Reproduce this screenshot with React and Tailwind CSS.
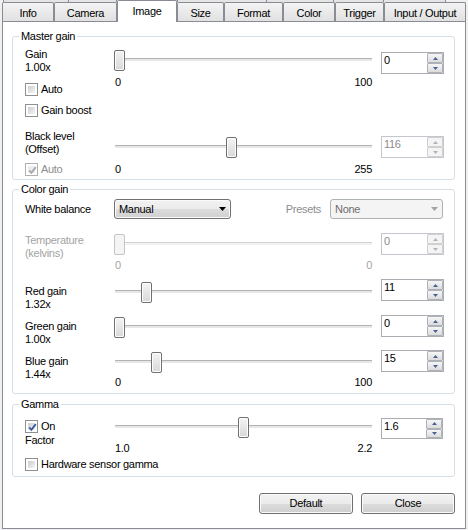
import React from "react";

const TABS = [
  { label: "Info", w: "w-[52px]" },
  { label: "Camera", w: "w-[63px]" },
  { label: "Image", w: "w-[60px]", active: true },
  { label: "Size", w: "w-[47px]" },
  { label: "Format", w: "w-[59px]" },
  { label: "Color", w: "w-[52px]" },
  { label: "Trigger", w: "w-[49px]" },
  { label: "Input / Output", w: "w-[82px]" },
];

// slider thumb travel in px (track width minus thumb)
const TRAVEL = 247;
const thumbLeft = (v, min, max) => Math.round(((v - min) / (max - min)) * TRAVEL);

const Tabs = () => (
  <div className="relative h-[21px]">
    {/* back row of tabs peeking out above */}
    <div className="absolute top-0 left-0 right-0 h-[2px] flex pl-[3px]">
      <div className="w-[66px] border-x border-[#898c95] bg-[#e4e4e4]" />
      <div className="w-[48px] border-r border-[#898c95] bg-[#e4e4e4]" />
      <div className="w-[60px]" />
      <div className="w-[90px] border-x border-[#898c95] bg-[#e4e4e4]" />
      <div className="w-[67px] border-r border-[#898c95] bg-[#e4e4e4]" />
      <div className="w-[50px] border-r border-[#898c95] bg-[#e4e4e4]" />
      <div className="w-[62px] border-r border-[#898c95] bg-[#e4e4e4]" />
    </div>
    <div className="relative flex items-end h-full pl-[2px]">
      {TABS.map((t) =>
        t.active ? (
          <div
            key={t.label}
            className={`${t.w} h-[22px] -mb-[1px] relative z-10 bg-white border border-b-0 border-[#898c95] rounded-t-[2px] text-center pt-[4px] leading-[13px]`}
          >
            {t.label}
          </div>
        ) : (
          <div
            key={t.label}
            className={`${t.w} h-[19px] border border-b-0 border-[#898c95] rounded-t-[2px] bg-gradient-to-b from-[#f3f3f3] to-[#e1e1e1] text-center pt-[4px] leading-[13px]`}
          >
            {t.label}
          </div>
        )
      )}
    </div>
  </div>
);

const Group = ({ title, className, children }) => (
  <div className={`relative border border-[#d5dfe5] rounded-[3px] pl-[12px] ${className}`}>
    <span className="absolute -top-[7px] left-[6px] bg-white px-[2px] leading-[13px]">{title}</span>
    {children}
  </div>
);

const Check = ({ label, checked, disabled, className = "" }) => (
  <div className={`flex items-center gap-[3px] h-[13px] ${className}`}>
    <span
      className={`relative w-[13px] h-[13px] border bg-white p-[2px] ${
        disabled ? "border-[#b1b1b1]" : "border-[#8e8f8f]"
      }`}
    >
      <span
        className={`block w-full h-full ${
          disabled ? "bg-[#ececec]" : "bg-gradient-to-br from-[#c9cdd3] to-[#f5f5f5]"
        }`}
      />
      {checked && (
        <svg className="absolute left-[1px] top-[1px]" width="11" height="11" viewBox="0 0 11 11">
          <path
            d="M2.2 5.4 L4.4 7.8 L8.8 2.2"
            fill="none"
            stroke={disabled ? "#a9a9a9" : "#3a5ba0"}
            strokeWidth="1.9"
          />
        </svg>
      )}
    </span>
    <span className={`leading-[13px] ${disabled ? "text-[#8d8d8d]" : ""}`}>{label}</span>
  </div>
);

const Slider = ({ pos, disabled }) => (
  <div className="relative h-[21px]">
    <div
      className={`absolute left-[1px] right-0 top-[8px] h-[3px] border-t ${
        disabled ? "border-[#d4d4d4] bg-[#f0f0f0]" : "border-[#b2b2b2] bg-[#e6e8e8]"
      }`}
    />
    <div
      className={`absolute top-0 w-[11px] h-[21px] rounded-[2px] border ${
        disabled
          ? "border-[#c4c4c4] bg-[#f4f4f4]"
          : "border-[#707070] bg-gradient-to-b from-[#f4f4f4] to-[#d8d8d8] shadow-[inset_0_0_0_1px_#fdfdfd]"
      }`}
      style={{ left: pos }}
    />
  </div>
);

const Range = ({ min, max, disabled, className = "" }) => (
  <div className={`flex justify-between pl-[1px] leading-[13px] ${disabled ? "text-[#a3a3a3]" : ""} ${className}`}>
    <span>{min}</span>
    <span>{max}</span>
  </div>
);

const SpinBtn = ({ up, disabled }) => (
  <div
    className={`flex items-center justify-center h-[10px] border rounded-[1px] ${
      disabled
        ? "border-[#d0d0d0] bg-[#f4f4f4]"
        : "border-[#adb2b9] bg-gradient-to-b from-[#f6f6f6] to-[#dcdcdc]"
    }`}
  >
    <svg width="5" height="3" viewBox="0 0 5 3">
      <path d={up ? "M0 3 L2.5 0 L5 3 Z" : "M0 0 L5 0 L2.5 3 Z"} fill={disabled ? "#b4b4b4" : "#4a5f94"} />
    </svg>
  </div>
);

const Spin = ({ value, disabled, h = "h-[22px]", w = "w-[63px]" }) => (
  <div className={`flex ${h} ${w} border bg-white ${disabled ? "border-[#c3c6cc]" : "border-[#abadb3]"}`}>
    <div className={`flex-1 pl-[2px] pt-[1px] leading-[13px] ${disabled ? "text-[#8b8b8b]" : ""}`}>{value}</div>
    <div className="flex flex-col w-[16px]">
      <SpinBtn up disabled={disabled} />
      <SpinBtn disabled={disabled} />
    </div>
  </div>
);

const Combo = ({ value, disabled, w }) => (
  <div
    className={`flex items-center ${w} h-[20px] rounded-[3px] border pl-[4px] pr-[4px] leading-[13px] ${
      disabled
        ? "border-[#adb2b5] bg-[#f4f4f4] text-[#6d6d6d]"
        : "border-[#707070] bg-[linear-gradient(#f2f2f2_0%,#ebebeb_50%,#dddddd_50%,#cfcfcf_100%)] shadow-[inset_0_0_0_1px_#fbfbfb]"
    }`}
  >
    <span className="flex-1">{value}</span>
    <svg width="7" height="4" viewBox="0 0 7 4">
      <path d="M0 0 L7 0 L3.5 4 Z" fill={disabled ? "#a2a2a2" : "#000"} />
    </svg>
  </div>
);

const Button = ({ children }) => (
  <div className="w-[94px] h-[21px] rounded-[3px] border border-[#707070] bg-[linear-gradient(#f2f2f2_0%,#ebebeb_50%,#dddddd_50%,#cfcfcf_100%)] shadow-[inset_0_0_0_1px_#fbfbfb] flex items-center justify-center leading-[13px]">
    {children}
  </div>
);

const Row = ({ className = "", children }) => (
  <div className={`grid grid-cols-[80px_258px_63px] gap-x-[9px] items-start ${className}`}>{children}</div>
);

export default function App() {
  return (
    <div className="w-[468px] h-[530px] bg-[#f0f0f0] text-black text-[11px] tracking-[-0.3px] font-['Liberation_Sans',Arial,sans-serif] overflow-hidden">
      <Tabs />

      <div className="ml-[2px] w-[464px] h-[508px] border border-[#898c95] bg-white pt-[14px] pl-[9px]">
        {/* Master gain */}
        <Group title="Master gain" className="w-[443px] h-[144px]">
          <Row className="mt-[11px]">
            <div className="leading-[13px]">
              <div>Gain</div>
              <div>1.00x</div>
              <Check label="Auto" className="mt-[9px]" />
              <Check label="Gain boost" className="mt-[8px]" />
            </div>
            <div className="mt-[2px]">
              <Slider pos={thumbLeft(0, 0, 100)} />
              <Range min="0" max="100" className="mt-[5px]" />
            </div>
            <div className="mt-[4px]">
              <Spin value="0" />
            </div>
          </Row>
          <Row className="mt-[13px]">
            <div className="leading-[13px]">
              <div>Black level</div>
              <div>(Offset)</div>
              <Check label="Auto" checked disabled className="mt-[7px]" />
            </div>
            <div className="mt-[7px]">
              <Slider pos={thumbLeft(116, 0, 255)} />
              <Range min="0" max="255" className="mt-[5px]" />
            </div>
            <div className="mt-[6px]">
              <Spin value="116" disabled />
            </div>
          </Row>
        </Group>

        {/* Color gain */}
        <Group title="Color gain" className="w-[443px] h-[205px] mt-[9px]">
          <div className="flex items-center h-[20px] mt-[9px] pr-[10px]">
            <div className="w-[89px] leading-[13px]">White balance</div>
            <Combo value="Manual" w="w-[117px]" />
            <div className="ml-auto mr-[9px] text-[#8d8d8d] leading-[13px]">Presets</div>
            <Combo value="None" w="w-[113px]" disabled />
            <div className="w-[1px]" />
          </div>
          <Row className="mt-[14px]">
            <div className="mt-[1px] leading-[13px] text-[#a3a3a3]">
              <div>Temperature</div>
              <div>(kelvins)</div>
            </div>
            <div className="mt-[1px]">
              <Slider pos={0} disabled />
              <Range min="0" max="0" disabled className="mt-[4px]" />
            </div>
            <div>
              <Spin value="0" disabled />
            </div>
          </Row>
          <Row className="mt-[7px]">
            <div className="mt-[6px] leading-[13px]">
              <div>Red gain</div>
              <div>1.32x</div>
            </div>
            <div className="mt-[3px]">
              <Slider pos={thumbLeft(11, 0, 100)} />
            </div>
            <div>
              <Spin value="11" />
            </div>
          </Row>
          <Row className="mt-[4px]">
            <div className="mt-[5px] leading-[13px]">
              <div>Green gain</div>
              <div>1.00x</div>
            </div>
            <div className="mt-[2px]">
              <Slider pos={thumbLeft(0, 0, 100)} />
            </div>
            <div>
              <Spin value="0" />
            </div>
          </Row>
          <Row className="mt-[4px]">
            <div className="mt-[5px] leading-[13px]">
              <div>Blue gain</div>
              <div>1.44x</div>
            </div>
            <div className="mt-[2px]">
              <Slider pos={thumbLeft(15, 0, 100)} />
              <Range min="0" max="100" className="mt-[3px]" />
            </div>
            <div>
              <Spin value="15" />
            </div>
          </Row>
        </Group>

        {/* Gamma */}
        <Group title="Gamma" className="w-[443px] h-[73px] mt-[10px]">
          <Row className="mt-[12px]">
            <div className="leading-[13px]">
              <Check label="On" checked className="mt-[3px]" />
              <div className="mt-[1px]">Factor</div>
            </div>
            <div>
              <Slider pos={thumbLeft(1.6, 1.0, 2.2)} />
              <Range min="1.0" max="2.2" className="mt-[4px]" />
            </div>
            <div className="mt-[1px]">
              <Spin value="1.6" h="h-[21px]" w="w-[62px]" />
            </div>
          </Row>
          <Check label="Hardware sensor gamma" className="mt-[3px]" />
        </Group>

        <div className="w-[443px] flex justify-end gap-[8px] mt-[16px]">
          <Button>Default</Button>
          <Button>Close</Button>
        </div>
      </div>
    </div>
  );
}
